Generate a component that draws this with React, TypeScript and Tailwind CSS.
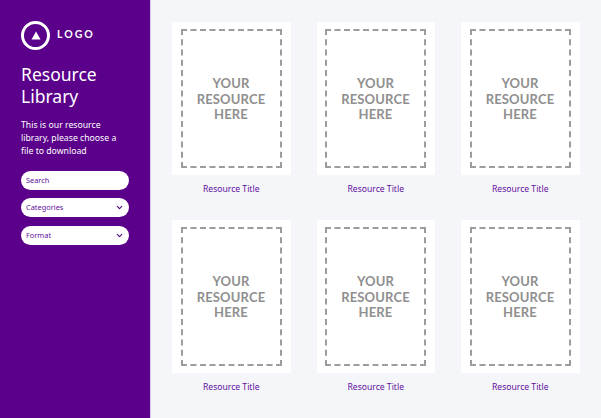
import { ChevronDown } from "lucide-react";

function Card() {
  return (
    <div className="flex flex-col items-center">
      <div className="w-[118.5px] h-[153px] bg-white pt-[7px] px-[8.5px] pb-[7px]">
        <div className="h-[139px] w-[101px] border-2 border-dashed border-[#9c9c9c] flex items-center justify-center text-center font-['Lato',sans-serif] font-bold text-[13px] leading-[15.5px] tracking-[0.15px] text-[#8f8f8f]">
          <div className="pt-[2px]">YOUR<br />RESOURCE<br />HERE</div>
        </div>
      </div>
      <div className="mt-[7px] h-[14px] leading-[14px] text-[8.6px] text-[#5f0fa0]">Resource Title</div>
    </div>
  );
}

function Field({ label, chevron }: { label: string; chevron?: boolean }) {
  return (
    <div className="h-[19px] w-[108px] rounded-full bg-white flex items-center justify-between pl-[5px] pr-[5px] text-[7.4px] text-[#5f0fa0]">
      <span className="pt-[1px]">{label}</span>
      {chevron && <ChevronDown size={9} strokeWidth={3} className="text-[#4f0a80]" />}
    </div>
  );
}

export default function App() {
  return (
    <div className="flex w-[601px] h-[418px] overflow-hidden bg-[#f5f6f9] font-['Noto_Sans',sans-serif]">
      <aside className="w-[151px] shrink-0 h-full bg-[#5a008a] pl-[21px] pt-[20px] border-r border-[#d8cde6]">
        <div className="flex items-center h-[30px]">
          <div className="w-[29px] h-[29px] rounded-full border-[3px] border-white flex items-center justify-center">
            <svg width="10" height="9" viewBox="0 0 10 9"><path d="M5 0.5 L9.5 8.5 H0.5 Z" fill="#fff" /></svg>
          </div>
          <span className="ml-[7px] text-[10.5px] font-['Lato',sans-serif] font-bold tracking-[2px] text-white">LOGO</span>
        </div>
        <h1 className="mt-[14px] text-[17.5px] leading-[21.5px] text-white font-normal">Resource<br />Library</h1>
        <p className="mt-[12px] text-[8.7px] leading-[13px] text-white">This is our resource<br />library, please choose a<br />file to download</p>
        <div className="mt-[12.5px] flex flex-col gap-[8.5px]">
          <Field label="Search" />
          <Field label="Categories" chevron />
          <Field label="Format" chevron />
        </div>
      </aside>
      <main className="flex-1 pt-[22px] pl-[21px] grid grid-cols-[118.5px_118.5px_118.5px] gap-x-[26px] gap-y-[24px] content-start">
        <Card /><Card /><Card /><Card /><Card /><Card />
      </main>
    </div>
  );
}
